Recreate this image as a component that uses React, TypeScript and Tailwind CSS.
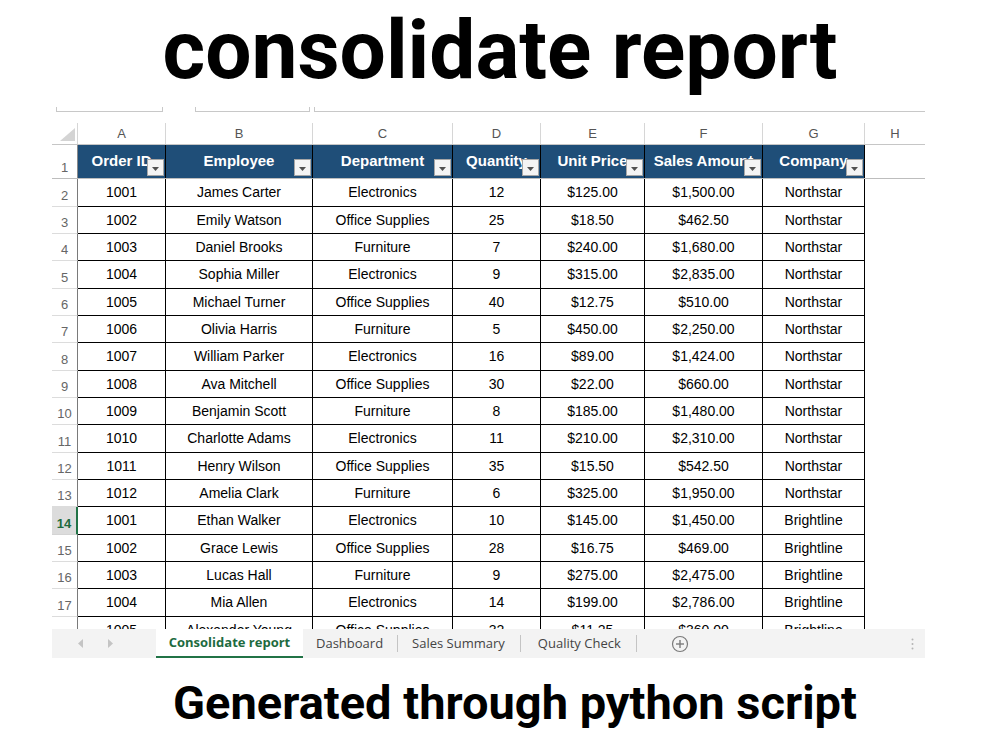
import React from "react";

const rows: string[][] = [
  ["1001", "James Carter", "Electronics", "12", "$125.00", "$1,500.00", "Northstar"],
  ["1002", "Emily Watson", "Office Supplies", "25", "$18.50", "$462.50", "Northstar"],
  ["1003", "Daniel Brooks", "Furniture", "7", "$240.00", "$1,680.00", "Northstar"],
  ["1004", "Sophia Miller", "Electronics", "9", "$315.00", "$2,835.00", "Northstar"],
  ["1005", "Michael Turner", "Office Supplies", "40", "$12.75", "$510.00", "Northstar"],
  ["1006", "Olivia Harris", "Furniture", "5", "$450.00", "$2,250.00", "Northstar"],
  ["1007", "William Parker", "Electronics", "16", "$89.00", "$1,424.00", "Northstar"],
  ["1008", "Ava Mitchell", "Office Supplies", "30", "$22.00", "$660.00", "Northstar"],
  ["1009", "Benjamin Scott", "Furniture", "8", "$185.00", "$1,480.00", "Northstar"],
  ["1010", "Charlotte Adams", "Electronics", "11", "$210.00", "$2,310.00", "Northstar"],
  ["1011", "Henry Wilson", "Office Supplies", "35", "$15.50", "$542.50", "Northstar"],
  ["1012", "Amelia Clark", "Furniture", "6", "$325.00", "$1,950.00", "Northstar"],
  ["1001", "Ethan Walker", "Electronics", "10", "$145.00", "$1,450.00", "Brightline"],
  ["1002", "Grace Lewis", "Office Supplies", "28", "$16.75", "$469.00", "Brightline"],
  ["1003", "Lucas Hall", "Furniture", "9", "$275.00", "$2,475.00", "Brightline"],
  ["1004", "Mia Allen", "Electronics", "14", "$199.00", "$2,786.00", "Brightline"],
  ["1005", "Alexander Young", "Office Supplies", "32", "$11.25", "$360.00", "Brightline"],
];

const cols = [
  { w: "w-[88px]", letter: "A", head: "Order ID" },
  { w: "w-[147px]", letter: "B", head: "Employee" },
  { w: "w-[140px]", letter: "C", head: "Department" },
  { w: "w-[88px]", letter: "D", head: "Quantity" },
  { w: "w-[104px]", letter: "E", head: "Unit Price" },
  { w: "w-[118px]", letter: "F", head: "Sales Amount" },
  { w: "w-[102px]", letter: "G", head: "Company" },
];

function FilterButton() {
  return (
    <div className="absolute right-[1px] bottom-[2px] w-[17px] h-[17px] bg-[#f4f4f4] border border-[#a6a6a6] flex items-end justify-center pb-[4px]">
      <svg width="7" height="4" viewBox="0 0 7 4">
        <polygon points="0,0 7,0 3.5,4" fill="#505050" />
      </svg>
    </div>
  );
}

export default function App() {
  return (
    <div className="w-[1000px] h-[750px] bg-white overflow-hidden font-['Liberation_Sans',Arial,sans-serif]">
      <div className="h-[100px] text-center font-bold text-[82px] leading-[100px] text-black font-['Roboto',sans-serif]">
        consolidate report
      </div>

      <div className="ml-[52px] w-[873px]">
        {/* formula bar remnants */}
        <div className="flex h-[12px] items-end">
          <div className="ml-[4px] w-[107px] h-[5px] border-x border-b border-[#c8c8c8]" />
          <div className="ml-[32px] w-[115px] h-[5px] border-x border-b border-[#c8c8c8]" />
          <div className="ml-[4px] flex-1 h-[5px] border-l border-b border-[#c8c8c8]" />
        </div>
        <div className="h-[11px]" />

        <div className="h-[506px] overflow-hidden">
          {/* column letters */}
          <div className="flex h-[22px] border-b border-[#c6c6c6]">
            <div className="w-[26px] h-full relative border-r border-[#d6d6d6]">
              <svg className="absolute left-0 top-0" width="26" height="22" viewBox="0 0 26 22">
                <polygon points="8,18 23,5 23,18" fill="#d4d4d4" />
              </svg>
            </div>
            {cols.map((c) => (
              <div
                key={c.letter}
                className={`${c.w} h-full flex items-center justify-center border-r border-[#d6d6d6] text-[13px] text-[#555]`}
              >
                {c.letter}
              </div>
            ))}
            <div className="w-[60px] h-full flex items-center justify-center text-[13px] text-[#555]">H</div>
          </div>

          {/* header row 1 */}
          <div className="flex h-[34px] border-b border-[#bdbdbd]">
            <div className="w-[26px] h-full flex items-end justify-center pb-[1px] text-[13px] text-[#666] border-r border-[#8a8a8a]">
              1
            </div>
            {cols.map((c) => (
              <div
                key={c.letter}
                className={`${c.w} h-full relative bg-[#1f4e78] border-r border-black flex items-center justify-center text-white font-bold text-[15px] whitespace-nowrap overflow-hidden`}
              >
                <span>{c.head}</span>
                <FilterButton />
              </div>
            ))}
            <div className="w-[60px] h-full" />
          </div>

          {/* data rows */}
          {rows.map((r, i) => {
            const num = i + 2;
            const active = num === 14;
            const last = i === rows.length - 1;
            const h = i % 3 === 0 ? "h-[28px]" : "h-[27px]";
            return (
              <div key={i} className={`flex ${h}`}>
                <div
                  className={
                    active
                      ? "w-[26px] h-full flex items-end justify-center pb-[1px] text-[13px] font-bold text-[#1e6b3f] bg-[#dcdcdc] border-b border-[#d4d4d4] border-r-2 border-r-[#217346]"
                      : "w-[26px] h-full flex items-end justify-center pb-[1px] text-[13px] text-[#666] border-b border-[#dcdcdc] border-r border-r-[#7a7a7a]"
                  }
                >
                  {last ? "" : num}
                </div>
                {r.map((v, j) => (
                  <div
                    key={j}
                    className={`${cols[j].w} h-full flex items-center justify-center border-r border-b border-black text-[14px] text-black whitespace-nowrap`}
                  >
                    {v}
                  </div>
                ))}
                <div className="w-[60px] h-full" />
              </div>
            );
          })}
        </div>

        {/* sheet tabs */}
        <div className="flex h-[29px] bg-[#f3f3f3] items-stretch font-['Open_Sans',sans-serif] text-[13px]">
          <div className="w-[104px] flex items-center">
            <svg className="ml-[26px]" width="6" height="9" viewBox="0 0 6 9">
              <polygon points="5,0 5,9 0,4.5" fill="#c4c4c4" />
            </svg>
            <svg className="ml-[24px]" width="6" height="9" viewBox="0 0 6 9">
              <polygon points="0,0 0,9 5,4.5" fill="#c4c4c4" />
            </svg>
          </div>
          <div className="w-[147px] bg-white border-b-2 border-[#217346] flex items-center justify-center font-bold text-[#1e6b3f]">
            Consolidate report
          </div>
          <div className="pl-[13px] pr-[14px] flex items-center text-[#444]">Dashboard</div>
          <div className="w-px h-[17px] self-center bg-[#c4c4c4]" />
          <div className="pl-[14px] pr-[15px] flex items-center text-[#444]">Sales Summary</div>
          <div className="w-px h-[17px] self-center bg-[#c4c4c4]" />
          <div className="pl-[17px] pr-[15px] flex items-center text-[#444]">Quality Check</div>
          <div className="w-px h-[17px] self-center bg-[#c4c4c4]" />
          <div className="ml-[34px] flex items-center">
            <svg width="18" height="18" viewBox="0 0 18 18">
              <circle cx="9" cy="9" r="7.5" fill="none" stroke="#7a7a7a" strokeWidth="1.2" />
              <line x1="9" y1="5" x2="9" y2="13" stroke="#7a7a7a" strokeWidth="1.4" />
              <line x1="5" y1="9" x2="13" y2="9" stroke="#7a7a7a" strokeWidth="1.4" />
            </svg>
          </div>
          <div className="flex-1" />
          <div className="w-[26px] flex items-center justify-center">
            <svg width="3" height="12" viewBox="0 0 3 12">
              <circle cx="1.5" cy="1.5" r="1" fill="#b4b4b4" />
              <circle cx="1.5" cy="6" r="1" fill="#b4b4b4" />
              <circle cx="1.5" cy="10.5" r="1" fill="#b4b4b4" />
            </svg>
          </div>
        </div>
      </div>

      <div className="mt-[10px] pl-[30px] text-center font-['Roboto',sans-serif] font-bold text-[47px] leading-normal text-black">
        Generated through python script
      </div>
    </div>
  );
}
